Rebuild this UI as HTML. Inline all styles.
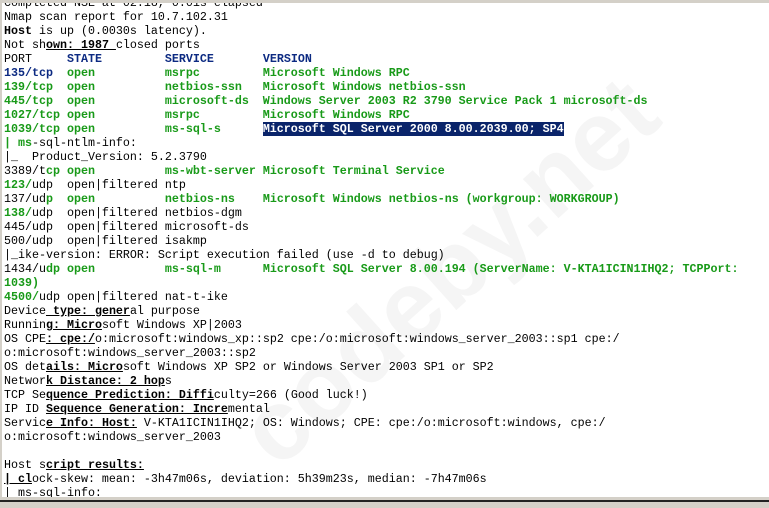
<!DOCTYPE html>
<html><head><meta charset="utf-8"><style>
html,body{margin:0;padding:0;}
body{width:769px;height:508px;overflow:hidden;background:#d4d0c8;position:relative;font-family:"Liberation Mono",monospace;font-size:11.67px;color:#000;}
#w{position:absolute;left:2px;top:3px;width:767px;height:494px;background:#fff;overflow:hidden;}
#wm{position:absolute;left:215px;top:400px;font:bold 100px "Liberation Sans",sans-serif;color:#f5f5f5;transform:rotate(-42deg);transform-origin:left top;white-space:nowrap;}
.l{position:absolute;left:2px;white-space:pre;line-height:14px;height:14px;}
.g{color:#189a18;font-weight:bold;}
.n{color:#0c2a82;font-weight:bold;}
.b{font-weight:bold;text-decoration:underline;}
.s{background:#0a246a;color:#fff;font-weight:bold;}
#bot{position:absolute;left:0;top:497px;width:769px;height:11px;background:#d4d0c8;}
#bot div{position:absolute;left:0;top:3px;width:769px;height:2px;background:#222;}
</style></head><body>
<div id="w">
<div id="wm">codeby.net</div>
<div class="l" style="top:-7px">Completed NSE at 02:18, 0.01s elapsed</div>
<div class="l" style="top:7px">Nmap scan report for 10.7.102.31</div>
<div class="l" style="top:21px"><b>Host</b> is up (0.0030s latency).</div>
<div class="l" style="top:35px">Not sh<span class="b">own: 1987 </span>closed ports</div>
<div class="l" style="top:49px">PORT     <span class="n">STATE</span>         <span class="n">SERVICE</span>       <span class="n">VERSION</span></div>
<div class="l" style="top:63px"><span class="n">135/tcp</span>  <span class="g">open          msrpc         Microsoft Windows RPC</span></div>
<div class="l g" style="top:77px">139/tcp  open          netbios-ssn   Microsoft Windows netbios-ssn</div>
<div class="l g" style="top:91px">445/tcp  open          microsoft-ds  Windows Server 2003 R2 3790 Service Pack 1 microsoft-ds</div>
<div class="l g" style="top:105px">1027/tcp open          msrpc         Microsoft Windows RPC</div>
<div class="l" style="top:119px"><span class="g">1039/tcp open          ms-sql-s      </span><span class="s">Microsoft SQL Server 2000 8.00.2039.00; SP4</span></div>
<div class="l" style="top:133px"><span class="g">| ms</span>-sql-ntlm-info:</div>
<div class="l" style="top:147px">|_  Product_Version: 5.2.3790</div>
<div class="l" style="top:161px">3389/t<span class="g">cp open          ms-wbt-server Microsoft Terminal Service</span></div>
<div class="l" style="top:175px"><span class="g">123/</span>udp  open|filtered ntp</div>
<div class="l" style="top:189px">137/ud<span class="g">p  open          netbios-ns    Microsoft Windows netbios-ns (workgroup: WORKGROUP)</span></div>
<div class="l" style="top:203px"><span class="g">138/</span>udp  open|filtered netbios-dgm</div>
<div class="l" style="top:217px">445/udp  open|filtered microsoft-ds</div>
<div class="l" style="top:231px">500/udp  open|filtered isakmp</div>
<div class="l" style="top:245px">|_ike-version: ERROR: Script execution failed (use -d to debug)</div>
<div class="l" style="top:259px">1434/u<span class="g">dp open          ms-sql-m      Microsoft SQL Server 8.00.194 (ServerName: V-KTA1ICIN1IHQ2; TCPPort:</span></div>
<div class="l g" style="top:273px">1039)</div>
<div class="l" style="top:287px"><span class="g">4500/</span>udp open|filtered nat-t-ike</div>
<div class="l" style="top:301px">Device<span class="b"> type: gener</span>al purpose</div>
<div class="l" style="top:315px">Runnin<span class="b">g: Micro</span>soft Windows XP|2003</div>
<div class="l" style="top:329px">OS CPE<span class="b">: cpe:/</span>o:microsoft:windows_xp::sp2 cpe:/o:microsoft:windows_server_2003::sp1 cpe:/</div>
<div class="l" style="top:343px">o:microsoft:windows_server_2003::sp2</div>
<div class="l" style="top:357px">OS det<span class="b">ails: Micro</span>soft Windows XP SP2 or Windows Server 2003 SP1 or SP2</div>
<div class="l" style="top:371px">Networ<span class="b">k Distance: 2 hop</span>s</div>
<div class="l" style="top:385px">TCP Se<span class="b">quence Prediction: Diffi</span>culty=266 (Good luck!)</div>
<div class="l" style="top:399px">IP ID <span class="b">Sequence Generation: Incre</span>mental</div>
<div class="l" style="top:413px">Servic<span class="b">e Info: Host:</span> V-KTA1ICIN1IHQ2; OS: Windows; CPE: cpe:/o:microsoft:windows, cpe:/</div>
<div class="l" style="top:427px">o:microsoft:windows_server_2003</div>
<div class="l" style="top:455px">Host s<span class="b">cript results:</span></div>
<div class="l" style="top:469px"><span class="b">| cl</span>ock-skew: mean: -3h47m06s, deviation: 5h39m23s, median: -7h47m06s</div>
<div class="l" style="top:483px">| ms-sql-info:</div>
</div>
<div id="bot"><div></div></div>
</body></html>
